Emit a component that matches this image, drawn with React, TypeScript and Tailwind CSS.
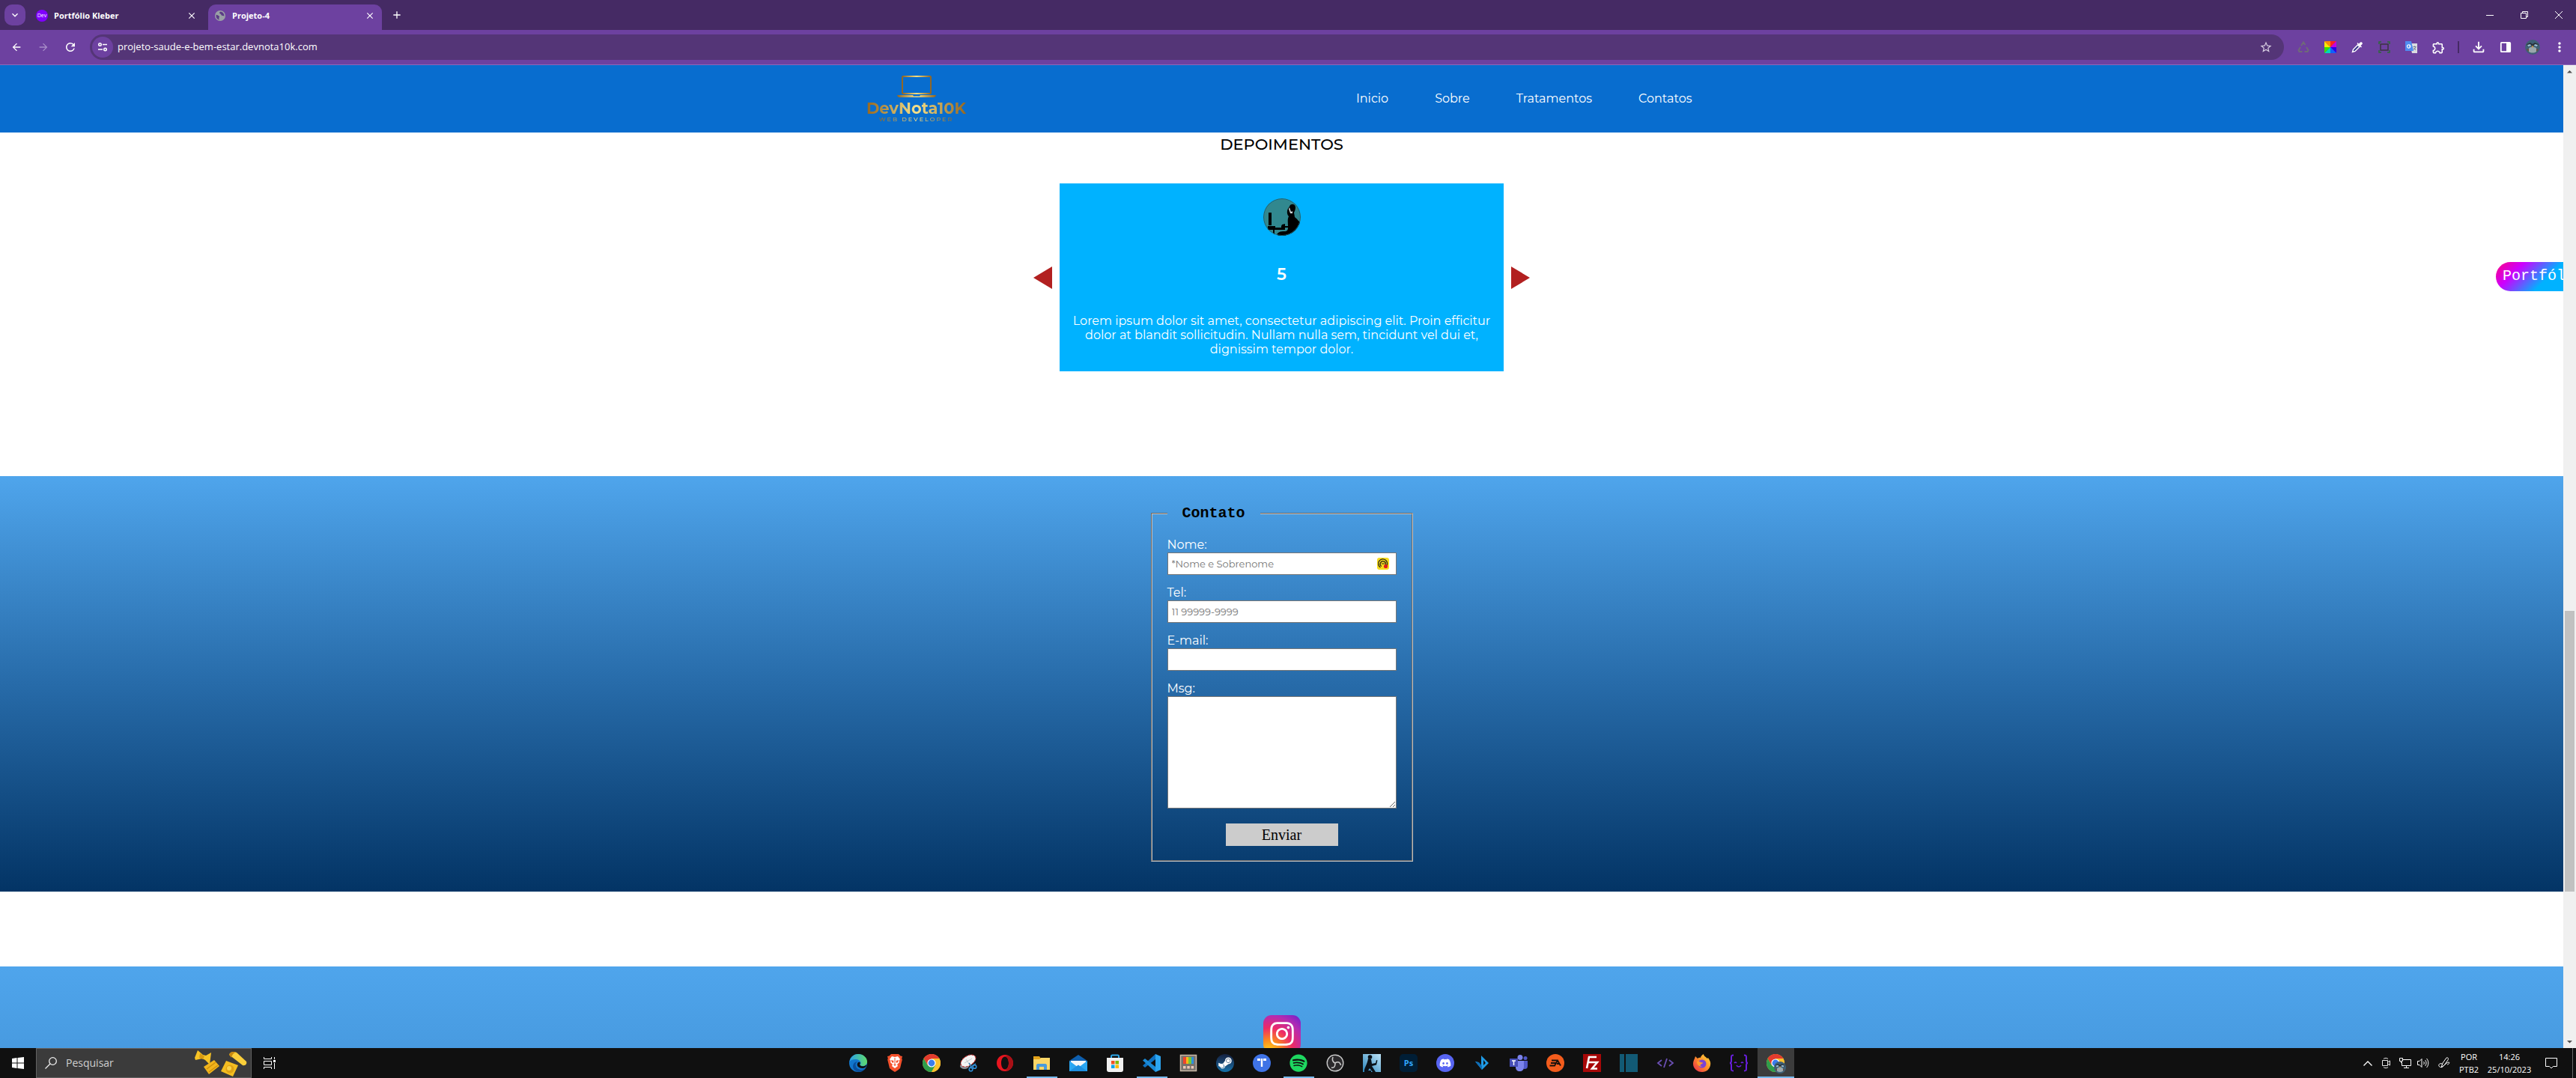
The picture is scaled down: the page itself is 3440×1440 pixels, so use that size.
import React from "react";
import { FaDiscord, FaSpotify, FaSteamSymbol, FaInstagram } from "react-icons/fa";
import {
  MdArrowBack,
  MdArrowForward,
  MdRefresh,
  MdClose,
  MdAdd,
  MdKeyboardArrowDown,
  MdStarBorder,
  MdOutlineExtension,
  MdMoreVert,
  MdOutlineFileDownload,
} from "react-icons/md";

type Box = { children: React.ReactNode; size?: string };

function Glyph({ children, size = "size-6" }: Box) {
  return (
    <svg viewBox="0 0 24 24" className={size} aria-hidden="true">
      {children}
    </svg>
  );
}

/* ---------- Browser chrome ---------- */

function Globe() {
  return (
    <svg viewBox="0 0 16 16" className="size-[14px] shrink-0" aria-hidden="true">
      <circle cx="8" cy="8" r="8" fill="#9aa0a6" />
      <path
        d="M1.8 6.5c2 .2 3.4 1 4.6 2 .9.8.4 2-.2 2.6-.5.5 0 1.800.8 2.900C3.600 13.800 1.400 11 1.800 6.500zM8.500 1.800c-1.300.5-2 1.400-1.300 2.400.6.9 1.800.6 2 1.600.3 1.300 1.500 2.500 3 2.300.9-.1 1.500.3 1.900.8.3-3.600-2-6.700-5.600-7.100z"
        fill="#5b3b86"
      />
    </svg>
  );
}

function TabStrip() {
  return (
    <div className="flex h-10 shrink-0 items-end bg-[#452a64] text-white">
      <button aria-label="Pesquisar guias" className="mb-[6px] ml-[6px] flex size-7 items-center justify-center rounded-[10px] bg-[#6d41a0]">
        <MdKeyboardArrowDown className="size-4" />
      </button>
      <div className="ml-[6px] flex h-[34px] w-[238px] items-center pr-[15px] pb-1 pl-2">
        <span className="flex size-4 items-center justify-center rounded-full bg-[#8000ff] text-[7px]">Dev</span>
        <span className="ml-2 grow text-[11px] leading-4 font-bold">Portfólio Kleber</span>
        <button aria-label="Fechar guia Portfólio Kleber">
          <MdClose className="size-[14px]" />
        </button>
      </div>
      <div className="flex h-[34px] w-[232px] items-center rounded-t-[10px] bg-[#6d41a0] pr-[9px] pb-1 pl-[9px]">
        <Globe />
        <span className="ml-[9px] grow text-[11px] leading-4 font-bold">Projeto-4</span>
        <button aria-label="Fechar guia Projeto-4">
          <MdClose className="size-[14px]" />
        </button>
      </div>
      <button aria-label="Nova guia" className="mb-3 ml-3">
        <MdAdd className="size-4" />
      </button>
      <div className="ml-auto flex h-10 items-center">
        <button aria-label="Minimizar" className="flex h-10 w-[46px] items-center justify-center">
          <span className="h-px w-[10px] bg-white" />
        </button>
        <button aria-label="Restaurar" className="flex h-10 w-[46px] items-center justify-center">
          <svg viewBox="0 0 10 10" className="size-[10px]" fill="none" stroke="#fff">
            <path d="M.5 2.500h7v7h-7zM2.500 2.500v-2h7v7h-2" />
          </svg>
        </button>
        <button aria-label="Fechar" className="flex h-10 w-[46px] items-center justify-center">
          <svg viewBox="0 0 10 10" className="size-[10px]" fill="none" stroke="#fff">
            <path d="M0 0l10 10M10 0L0 10" />
          </svg>
        </button>
      </div>
    </div>
  );
}

const wheel = ["#ff2020", "#ff8a00", "#ffe600", "#3be000", "#00d5c0", "#1060ff", "#2a00e8", "#c400e0"];

function ColorWheel() {
  const points = [[8, 0], [16, 0], [16, 8], [16, 16], [8, 16], [0, 16], [0, 8], [0, 0]];
  const fills = [wheel[0], wheel[7], wheel[6], wheel[5], wheel[4], wheel[3], wheel[2], wheel[1]];
  return (
    <svg viewBox="0 0 16 16" className="size-4">
      {points.map((p, i) => {
        const q = points[(i + 1) % 8];
        return <path key={i} d={`M8 8L${p[0]} ${p[1]}L${q[0]} ${q[1]}z`} fill={fills[i]} />;
      })}
    </svg>
  );
}

function Slot({ label, children }: { label: string; children: React.ReactNode }) {
  return (
    <button aria-label={label} className="flex h-[34px] w-9 items-center justify-center">
      {children}
    </button>
  );
}

function Toolbar() {
  return (
    <div className="flex h-[47px] shrink-0 items-center border-b border-[#8d68b8] bg-[#6d41a0] pr-1 pl-1 text-white">
      <Slot label="Voltar"><MdArrowBack className="size-4" /></Slot>
      <Slot label="Avançar"><MdArrowForward className="size-4 text-[#a78cc8]" /></Slot>
      <Slot label="Recarregar"><MdRefresh className="size-[18px]" /></Slot>
      <div className="ml-2 flex h-[34px] grow items-center rounded-full bg-[#543577] pr-[6px] pl-[3px]">
        <button aria-label="Informações do site" className="flex size-7 items-center justify-center rounded-full bg-[#6d41a0]">
          <svg viewBox="0 0 16 16" className="size-4" fill="none" stroke="#fff" strokeWidth="1.600">
            <circle cx="4.500" cy="4.500" r="1.700" />
            <circle cx="11.500" cy="11" r="1.700" />
            <path d="M8 4.500h6M2 11h6" />
          </svg>
        </button>
        <input
          aria-label="Barra de endereço"
          defaultValue="projeto-saude-e-bem-estar.devnota10k.com"
          className="ml-[6px] min-w-0 grow bg-transparent text-[13px] text-white outline-none"
        />
        <button aria-label="Favoritar" className="flex w-9 justify-center">
          <MdStarBorder className="size-[18px] text-[#d8cfe2]" />
        </button>
      </div>
      <div className="ml-2 flex items-center">
        <Slot label="Reciclar">
          <svg viewBox="0 0 16 16" className="size-4" fill="none" stroke="#6f6a78" strokeWidth="2">
            <path d="M5 6l3-4.500L10.500 5M12 8l2.500 4-1 2H9.500M6.500 14H2.500l-1-2L4 8" />
          </svg>
        </Slot>
        <Slot label="Cores"><ColorWheel /></Slot>
        <Slot label="Conta-gotas">
          <svg viewBox="0 0 16 16" className="size-4">
            <path d="M1.500 14.500l1-3.500 6-6 2.500 2.500-6 6z" fill="#3d3a8f" stroke="#fff" strokeWidth="1.400" />
            <path d="M7.500 3l5.500 5.500 1-1-1.500-1.500 2-2c1.300-1.300-1-3.600-2.500-2.500l-2 2L8.500 2z" fill="#fff" />
          </svg>
        </Slot>
        <Slot label="Captura">
          <svg viewBox="0 0 16 16" className="size-4" fill="none">
            <path d="M1 4V1h3M12 1h3v3M15 12v3h-3M4 15H1v-3" stroke="#2c6b3a" strokeWidth="1.500" />
            <path d="M3 4h10v8H3z" stroke="#3b3540" strokeWidth="1.500" />
          </svg>
        </Slot>
        <Slot label="Tradutor">
          <svg viewBox="0 0 16 16" className="size-4">
            <path d="M6 3h10v13H9z" fill="#dadce0" />
            <path d="M0 0h8l3 13H0z" fill="#4f8cf0" />
            <path d="M6.800 6.300A2.200 2.200 0 106.900 7H5" fill="none" stroke="#fff" strokeWidth="1.200" />
            <path d="M10.500 7.500h4M12.500 6.500v1M14 7.500c-.5 2-1.500 3-3 4M11.500 9l2.500 3" stroke="#6b7b8c" fill="none" />
          </svg>
        </Slot>
        <Slot label="Extensões"><MdOutlineExtension className="size-[19px]" /></Slot>
        <span className="mx-2 h-4 w-[2px] bg-[#452a64]" />
        <Slot label="Downloads"><MdOutlineFileDownload className="size-[22px]" /></Slot>
        <Slot label="Painel lateral">
          <svg viewBox="0 0 16 16" className="size-4">
            <rect x="1.800" y="1.800" width="12.400" height="12.400" rx="1" fill="none" stroke="#fff" strokeWidth="1.800" />
            <path d="M9 2h5v12H9z" fill="#fff" />
          </svg>
        </Slot>
        <Slot label="Perfil"><Penguin size="size-5" /></Slot>
        <Slot label="Menu"><MdMoreVert className="size-5" /></Slot>
      </div>
    </div>
  );
}

function Penguin({ size }: { size: string }) {
  return (
    <svg viewBox="0 0 20 20" className={size}>
      <circle cx="10" cy="10" r="10" fill="#3f6076" />
      <path d="M2 6l5-2 3 2 3-2 5 2-1 3-4-1H7L3 9z" fill="#2a323b" />
      <path d="M3 7l4-1 1 2-4 1zM12 8l1-2 4 1-1 2z" fill="#9cc3da" />
      <path d="M5 12c0-3 10-3 10 0v4c-3 2-7 2-10 0z" fill="#9aa7ac" />
      <path d="M8.500 8.500h3L10 11z" fill="#e09a35" />
      <path d="M2 13l3-1v4zM18 13l-3-1v4z" fill="#6d4b3a" />
    </svg>
  );
}

/* ---------- Page ---------- */

function Logo() {
  return (
    <a href="#inicio" className="flex w-[130px] flex-col items-center">
      <svg viewBox="0 0 52 30" className="h-[30px] w-[52px]" aria-hidden="true">
        <defs>
          <linearGradient id="gold" x1="0" x2="1">
            <stop offset="0" stopColor="#8f6524" />
            <stop offset=".5" stopColor="#f3df85" />
            <stop offset="1" stopColor="#8f6524" />
          </linearGradient>
        </defs>
        <rect x="7" y="1" width="38" height="23" rx="1" fill="none" stroke="url(#gold)" strokeWidth="2" />
        <path d="M0 26h21l1 1.500h8l1-1.500h21c-.5 2-1.500 3-3 3H3c-1.500 0-2.500-1-3-3z" fill="url(#gold)" />
      </svg>
      <span className="mt-1 bg-[linear-gradient(90deg,#95661f,#f5e28c,#95661f)] bg-clip-text text-[21px] leading-5 font-bold text-transparent">
        DevNota10K
      </span>
      <span className="bg-[linear-gradient(90deg,#95661f,#f5e28c,#95661f)] bg-clip-text text-[8px] leading-2 font-medium tracking-[2px] text-transparent">
        WEB DEVELOPER
      </span>
    </a>
  );
}

function SiteHeader() {
  return (
    <header className="flex h-[90px] shrink-0 justify-center bg-[#086dcf]">
      <div className="flex w-full max-w-[1106px] items-center justify-between pr-[5px]">
        <Logo />
        <nav className="flex gap-[62px] text-base leading-5 text-white">
          <a href="#inicio">Inicio</a>
          <a href="#sobre">Sobre</a>
          <a href="#tratamentos">Tratamentos</a>
          <a href="#contatos">Contatos</a>
        </nav>
      </div>
    </header>
  );
}

function Testimonials() {
  return (
    <section className="h-[459px] shrink-0 bg-white">
      <h2 className="pt-1 text-center text-[21px] leading-6 font-medium text-black">DEPOIMENTOS</h2>
      <div className="mt-10 flex items-center justify-center gap-[10px]">
        <button aria-label="Anterior">
          <svg viewBox="0 0 25 30" className="h-[30px] w-[25px]"><path d="M25 0v30L0 15z" fill="#b22020" /></svg>
        </button>
        <article className="flex w-[593px] flex-col items-center bg-[#00b2ff] px-4 py-5 text-center text-white">
          <svg viewBox="0 0 50 50" className="size-[50px]" role="img" aria-label="Foto do cliente">
            <clipPath id="avatar"><circle cx="25" cy="25" r="25" /></clipPath>
            <g clipPath="url(#avatar)">
              <path d="M0 0h50v50H0z" fill="#31888f" />
              <path d="M7 19h4v17H7zM6 37h23v-3l-4 1-1 2H16v2h13v3H15v8h-2v-8H6z" />
              <path d="M35 11c1-5 8-4 8 1 0 3-1 5-2 7l1 6c4 3 6 7 8 7v18H18c0-5 5-6 10-6 4 0 5-2 5-5h-9v-2h9c0-6-1-9 1-13-3-3-3-9 1-13z" />
              <path d="M35 12l2 6 2-1v3h-3l-2-6z" fill="#cfd6d8" />
              <circle cx="25" cy="25" r="24.500" fill="none" stroke="#1d5f74" />
            </g>
          </svg>
          <strong className="mt-10 text-[22px] leading-6 font-semibold">5</strong>
          <p className="mt-10 text-base leading-[19px]">
            Lorem ipsum dolor sit amet, consectetur adipiscing elit. Proin efficitur
            <br />
            dolor at blandit sollicitudin. Nullam nulla sem, tincidunt vel dui et,
            <br />
            dignissim tempor dolor.
          </p>
        </article>
        <button aria-label="Próximo">
          <svg viewBox="0 0 25 30" className="h-[30px] w-[25px]"><path d="M0 0v30l25-15z" fill="#b22020" /></svg>
        </button>
      </div>
    </section>
  );
}

const field =
  "block h-[30px] w-full border border-[#767676] bg-white px-[5px] text-[13px] text-black placeholder:text-[#757575] outline-none";

function ContactForm() {
  return (
    <section id="contatos" className="flex h-[555px] shrink-0 justify-center bg-[linear-gradient(180deg,#4fa5ec,#276ba9_50%,#033465)] pt-[38px]">
      <form className="w-[350px]" onSubmit={(e) => e.preventDefault()}>
        <fieldset className="h-[477px] border-2 border-[#c0c0c0] px-5 [border-style:groove]">
          <legend className="px-5 font-['Liberation_Mono'] text-xl leading-6 font-bold text-black">Contato</legend>
          <div className="mt-5 flex flex-col gap-[14px] text-base leading-5 text-white">
            <label className="block">
              Nome:
              <span className="relative block">
                <input type="text" placeholder="*Nome e Sobrenome" className={field} />
                <svg viewBox="0 0 16 16" className="absolute top-[7px] right-[10px] size-4">
                  <rect width="16" height="16" rx="3" fill="#f7dc1c" />
                  <path d="M4.500 13a6 6 0 117.500-1M6 11.500a3.600 3.600 0 115-1.500" fill="none" stroke="#2b2413" strokeWidth="1.300" />
                  <path d="M6 8h4" stroke="#2b2413" />
                  <circle cx="11.500" cy="11.500" r="2.600" fill="#e01b1b" />
                </svg>
              </span>
            </label>
            <label className="block">
              Tel:
              <input type="tel" placeholder="11 99999-9999" className={field} />
            </label>
            <label className="block">
              E-mail:
              <input type="email" className={field} />
            </label>
            <label className="block">
              Msg:
              <textarea className="block h-[150px] w-full resize border border-[#767676] bg-white px-[5px] text-[13px] text-black outline-none" />
            </label>
          </div>
          <button className="mx-auto mt-5 block h-[30px] w-[150px] bg-[#cccccc] font-['Liberation_Serif'] text-xl leading-[30px] text-black">
            Enviar
          </button>
        </fieldset>
      </form>
    </section>
  );
}

function SiteFooter() {
  return (
    <footer className="mt-[100px] flex h-[555px] shrink-0 justify-center bg-[linear-gradient(180deg,#4fa5ec,#2a70b0)] pt-[65px]">
      <a
        href="#instagram"
        aria-label="Instagram"
        className="flex size-[50px] items-center justify-center rounded-[11px] bg-[radial-gradient(circle_at_15%_100%,#ffe01b_0%,#fb8a1e_25%,#ee2a66_50%,#b52bb0_75%,#6a1fd0_100%)] text-white"
      >
        <FaInstagram className="size-9" />
      </a>
    </footer>
  );
}

function ScrollBar() {
  return (
    <div className="flex w-[17px] shrink-0 flex-col items-center bg-[#f0f0f0]" aria-hidden="true">
      <svg viewBox="0 0 17 17" className="size-[17px]"><path d="M5 10.500h7L8.500 7z" fill="#505050" /></svg>
      <div className="grow-[712]" />
      <div className="w-[13px] grow-[375] bg-[#c1c1c1]" />
      <div className="grow-[192]" />
      <svg viewBox="0 0 17 17" className="size-[17px]"><path d="M5 7h7l-3.500 3.500z" fill="#505050" /></svg>
    </div>
  );
}

/* ---------- Taskbar ---------- */

type TaskItem = { name: string; icon: React.ReactNode; open?: boolean; active?: boolean };

const chrome = (
  <>
    <circle cx="12" cy="12" r="12" fill="#fbc02d" />
    <path d="M12 6h10.400A12 12 0 001.600 6L7 15z" fill="#e33b2e" />
    <path d="M1.600 6L6.800 15l5.200 3-2 5.900A12 12 0 011.600 6z" fill="#2f9e4b" />
    <path d="M6.800 15h10.400L12 24a12 12 0 01-1.500-.1z" fill="#2f9e4b" />
    <path d="M17.200 15L12 24A12 12 0 0022.400 6H12z" fill="#fbc02d" />
    <circle cx="12" cy="12" r="5.600" fill="#fff" />
    <circle cx="12" cy="12" r="4.400" fill="#3b7ded" />
  </>
);

const apps: TaskItem[] = [
  {
    name: "Edge",
    icon: (
      <Glyph>
        <defs>
          <linearGradient id="edge" x1="0" x2="1"><stop stopColor="#2a9fe6" /><stop offset="1" stopColor="#5fdc6c" /></linearGradient>
        </defs>
        <circle cx="12" cy="12" r="12" fill="#1176cc" />
        <path d="M.5 10C2 3 7 0 12 0c7 0 12 5 12 10 0 4-3 6-6 6s-4-1-3.500-2c1-1 1-2 1-2.500C15 9 12 7 8.500 7S2 8 .5 10z" fill="url(#edge)" />
        <path d="M8.500 14c0 5 4.500 7 8 7 2 0 4-1 5-2-2 3.500-6 5-9 5-6-1-8.500-6-7-10 1-3 4-4 6-4-2 1-3 2.500-3 4z" fill="#0a4f9c" />
        <path d="M14.800 12c0 1-1.500 2 .5 3.500s6 1 8-1.500c0 3-2.500 5-6 5-5 0-8-4-6-7 1-2 3.500-1.500 3.500 0z" fill="#101010" />
      </Glyph>
    ),
  },
  {
    name: "Brave",
    icon: (
      <Glyph>
        <path d="M7 0h10l2.500 2.500L22 3l-.8 3 .6 1.500L19 19l-3 2.500L12 24l-4-2.500L5 19 2.200 7.500 2.800 6 2 3l2.500-.5z" fill="#f4512c" />
        <path d="M12 4l4-1 3 4-1.500 2 .5 2-3 3 1 2-4 3-4-3 1-2-3-3 .5-2L5 7l3-4z" fill="#fff" />
        <path d="M7 8l3.500 1-.5 3-2-1zM17 8l-3.500 1 .5 3 2-1zM10 14l2-.8 2 .8-2 2zM11.500 5h1v8h-1z" fill="#f4512c" />
      </Glyph>
    ),
  },
  { name: "Chrome", icon: <Glyph>{chrome}</Glyph> },
  {
    name: "Ferramenta de Captura",
    icon: (
      <Glyph>
        <ellipse cx="7" cy="16" rx="6" ry="4" fill="#8a8f96" />
        <ellipse cx="12" cy="9" rx="11" ry="6.500" transform="rotate(-32 12 9)" fill="#f4f4f4" stroke="#c33" strokeWidth="1" strokeDasharray="3 1.500" />
        <path d="M7 12l10-6M9 7l4 6" stroke="#b5bcc5" strokeWidth=".8" />
        <path d="M13 12l5 8M22 13l-8 5" stroke="#3a7fb8" strokeWidth="1.500" />
        <circle cx="15.500" cy="20.500" r="2.300" fill="none" stroke="#2f8fd8" strokeWidth="1.600" />
        <circle cx="20.500" cy="17" r="2.300" fill="none" stroke="#2f8fd8" strokeWidth="1.600" />
      </Glyph>
    ),
  },
  {
    name: "Opera",
    icon: (
      <Glyph>
        <path fillRule="evenodd" d="M12 1c6.500 0 11 5 11 11s-4.500 11-11 11S1 18 1 12 5.500 1 12 1zm0 2.500c-3 0-5 4-5 8.500s2 8.500 5 8.500 5-4 5-8.500-2-8.500-5-8.500z" fill="#e8151f" />
        <path d="M12 3.500C16 0 23 5 23 12s-7 12-11 8.500c3 0 5-4 5-8.500s-2-8.500-5-8.500z" fill="#a81016" />
      </Glyph>
    ),
  },
  {
    name: "Explorador de Arquivos",
    open: true,
    icon: (
      <Glyph>
        <path d="M1 3h8l2 3h11v15H1z" fill="#e3a21a" />
        <path d="M1 7h8l2-2h12v16H1z" fill="#fbd667" />
        <path d="M5 21v-6c0-1 1-2 2-2h10c1 0 2 1 2 2v6h-4v-4H9v4z" fill="#4a9bdc" />
      </Glyph>
    ),
  },
  {
    name: "Email",
    icon: (
      <Glyph>
        <path d="M0 9l12-8 12 8v14H0z" fill="#0f5fae" />
        <path d="M2 9h20v10H2z" fill="#f3f6f9" />
        <path d="M0 9l12 9L24 9v14H0z" fill="#2aa6f2" />
        <path d="M0 23l12-8.500L24 23z" fill="#1d8fe0" />
      </Glyph>
    ),
  },
  {
    name: "Microsoft Store",
    icon: (
      <Glyph>
        <path d="M7 6V3c0-1 .5-1.500 1.500-1.500h7c1 0 1.500.5 1.500 1.500v3" fill="none" stroke="#2ca6e8" strokeWidth="2" />
        <path d="M1 5h22v16c0 2-1 3-3 3H4c-2 0-3-1-3-3z" fill="#f1f1f1" />
        <path d="M7 9h4.500v4.500H7z" fill="#f25022" /><path d="M12.500 9H17v4.500h-4.500z" fill="#7fba00" />
        <path d="M7 14.500h4.500V19H7z" fill="#00a4ef" /><path d="M12.500 14.500H17V19h-4.500z" fill="#ffb900" />
      </Glyph>
    ),
  },
  {
    name: "Visual Studio Code",
    open: true,
    icon: (
      <Glyph>
        <path d="M17 0v7L3 18l-3-2.500z" fill="#0e70c0" />
        <path d="M17 24v-7L3 6 0 8.500z" fill="#1a8ad6" />
        <path d="M17 0l7 3v18l-7 3z" fill="#2ba5f0" />
      </Glyph>
    ),
  },
  {
    name: "PowerToys",
    icon: (
      <Glyph>
        <path d="M1.500 1.500h21v21h-21z" fill="#77716c" stroke="#c9b9a6" strokeWidth="1.500" />
        <path d="M5 4h4v9H5z" fill="#f0452c" /><path d="M9 4h3v9H9z" fill="#f9b817" />
        <path d="M12 4h4v9h-4z" fill="#74c83a" /><path d="M16 4h3v9h-3z" fill="#2b8fe0" />
        <path d="M5 16h3.500v3.500H5zM10.300 16h3.500v3.500h-3.500zM15.600 16h3.500v3.500h-3.500z" fill="#ecc9b8" />
      </Glyph>
    ),
  },
  {
    name: "Steam",
    icon: (
      <span className="flex size-6 items-center justify-center rounded-full bg-linear-to-b from-[#13203f] to-[#1273ac] text-white">
        <FaSteamSymbol className="size-5" />
      </span>
    ),
  },
  {
    name: "Tarefas",
    icon: (
      <Glyph>
        <circle cx="12" cy="12" r="12" fill="#3f73e6" />
        <path d="M6 7.500h4M14 7.500h4" stroke="#fff" strokeWidth="3" />
        <path d="M12 6v11" stroke="#fff" strokeWidth="2.400" />
      </Glyph>
    ),
  },
  {
    name: "Spotify",
    open: true,
    icon: <FaSpotify className="size-6 text-[#1ed760]" />,
  },
  {
    name: "OBS Studio",
    icon: (
      <Glyph>
        <circle cx="12" cy="12" r="10.800" fill="#2b2a2c" stroke="#c9c9c9" strokeWidth="1.400" />
        <path d="M9 4c-1.500 4 0 7 3 8M19.500 15c-.5-4-4-5.500-7.500-3M7 18c4 1 5-2 5-6" fill="none" stroke="#c9c9c9" strokeWidth="1.600" />
      </Glyph>
    ),
  },
  {
    name: "Kindle",
    icon: (
      <Glyph>
        <defs><linearGradient id="kindle" x1="0" x2="1" y1="1" y2="0"><stop stopColor="#2b86bd" /><stop offset="1" stopColor="#bfe4f7" /></linearGradient></defs>
        <path d="M0 0h24v24H0z" fill="url(#kindle)" />
        <circle cx="9.500" cy="4" r="2.800" fill="#0a1118" />
        <path d="M7 6l4 1 1 6 5-1 1-4 1.500.5-1.500 6-6 1.500 5 8h-4l-4-5-2 3h4v2H2c-1-5 4-10 5-18z" fill="#0a1118" />
      </Glyph>
    ),
  },
  {
    name: "Photoshop",
    icon: <span className="flex size-6 items-center justify-center rounded-[5px] bg-[#001e36] text-[11px] font-bold text-[#31a8ff]">Ps</span>,
  },
  {
    name: "Discord",
    icon: (
      <span className="flex size-6 items-center justify-center rounded-full bg-[#5865f2] text-white">
        <FaDiscord className="size-4" />
      </span>
    ),
  },
  {
    name: "Baixador",
    icon: (
      <Glyph>
        <path d="M3 10l4 1 4 5V2l10 10-9 9z" fill="#1f9be6" />
        <path d="M14 8l3 4-3 3z" fill="#101010" />
        <path d="M3 10l9 11v-5L8 11z" fill="#0f6db5" />
      </Glyph>
    ),
  },
  {
    name: "Teams",
    icon: (
      <Glyph>
        <circle cx="14" cy="4.500" r="3.500" fill="#7b83eb" /><circle cx="21" cy="5.500" r="2.500" fill="#5059c9" />
        <path d="M17 9h7v7c0 3-2 4-4 4s-3-1-3-3z" fill="#5059c9" />
        <path d="M8 9h11v8c0 4-2 6-5.500 6S8 21 8 17z" fill="#7b83eb" />
        <path d="M0 6h11v11H0z" fill="#464eb8" />
        <path d="M3 9h5M5.500 9v6" stroke="#fff" strokeWidth="1.500" />
      </Glyph>
    ),
  },
  {
    name: "EA",
    icon: (
      <Glyph>
        <circle cx="12" cy="12" r="12" fill="#f35c1c" />
        <path d="M7 8.500h7M6 12h6.500M4.500 15.500h6.500l4-7 4 7M14 13h4" fill="none" stroke="#16100d" strokeWidth="1.800" />
      </Glyph>
    ),
  },
  {
    name: "FileZilla",
    icon: (
      <Glyph>
        <path d="M0 0h24v24H0z" fill="#a80808" />
        <path d="M5 19L8 4h10M6.500 11h8M12 11h7l-7 8.500h7" fill="none" stroke="#fff" strokeWidth="2.600" />
      </Glyph>
    ),
  },
  {
    name: "Painéis",
    icon: <Glyph><path d="M0 0h6v24H0zM8 0h16v24H8z" fill="#125a75" /></Glyph>,
  },
  {
    name: "Editor",
    icon: (
      <Glyph>
        <path d="M7 8l-5 4 5 4M17 8l5 4-5 4M14 6l-4 12" fill="none" stroke="#6a4fb3" strokeWidth="1.800" />
      </Glyph>
    ),
  },
  {
    name: "Firefox",
    icon: (
      <Glyph>
        <defs><linearGradient id="fox" x1="1" x2="0" y1="0" y2="1"><stop stopColor="#ffe23d" /><stop offset=".5" stopColor="#ff8a2a" /><stop offset="1" stopColor="#ec2350" /></linearGradient></defs>
        <path d="M2 6l1-3 3 3c1-1 3-1.500 4-1 0-2 2-4 4-5 0 3 3 3.500 5 6l1-1c2 3 4 6 3 10-1 5-5 9-11 9C5 24 0 19 0 13c0-3 1-5 2-7z" fill="url(#fox)" />
        <circle cx="12" cy="13" r="5.500" fill="#7a43d6" />
        <path d="M5 10c2-1 4 0 5 1l3 .5c0 1.500-2 1.500-3 2.500s0 2.500 2 2.500c-4 1-7-2-7-6.500z" fill="#ff9a2c" />
      </Glyph>
    ),
  },
  {
    name: "Chaves",
    icon: (
      <Glyph>
        <path d="M5 1.500c-3 0-3 1-3 3V9c0 2-1 3-2 3 1 0 2 1 2 3v4.500c0 2 0 3 3 3M19 1.500c3 0 3 1 3 3V9c0 2 1 3 2 3-1 0-2 1-2 3v4.500c0 2 0 3-3 3" fill="none" stroke="#6a1fe0" strokeWidth="2" />
        <path d="M6 12c1-1.500 2-1.500 3 0M15 12c1-1.500 2-1.500 3 0M9 15c1 2.500 5 2.500 6 0" fill="none" stroke="#6a1fe0" strokeWidth="1.500" />
      </Glyph>
    ),
  },
  {
    name: "Chrome perfil",
    open: true,
    active: true,
    icon: (
      <span className="relative block size-6">
        <Glyph>{chrome}</Glyph>
        <span className="absolute -right-[2px] -bottom-[2px]"><Penguin size="size-4" /></span>
      </span>
    ),
  },
];

function TaskApp({ app }: { app: TaskItem }) {
  return (
    <button
      aria-label={app.name}
      className={
        app.active
          ? "relative flex h-10 w-[49px] items-center justify-center bg-[#3c3c3c]"
          : "relative flex h-10 w-[49px] items-center justify-center"
      }
    >
      {app.icon}
      {app.open && (
        <span className={app.active ? "absolute inset-x-0 bottom-0 h-[2px] bg-[#76b9ed]" : "absolute inset-x-1 bottom-0 h-[2px] bg-[#76b9ed]"} />
      )}
    </button>
  );
}

function Pasta() {
  return (
    <svg viewBox="0 0 72 38" className="h-[38px] w-[72px] shrink-0" aria-hidden="true">
      <path d="M1 12L5 2l7 6 4 1 7-4-2 16-6-6-4-2-9 2z" fill="#f7c325" />
      <path d="M8 6l6 4-2 4-5-2z" fill="#d99a10" />
      <path d="M13 24l14-9 7 8-14 11z" fill="#f2b51c" />
      <path d="M17 27l12-9M20 31l12-9" stroke="#cf8f0c" strokeWidth="1.500" />
      <path d="M47 8c1-4 6-5 10-3l13 12c1 3-1 6-5 5z" fill="#fbcf3a" />
      <path d="M47 8c1-4 6-5 9-3-3 0-5 3-6 7z" fill="#c98a10" />
      <path d="M36 30l7-14 16 6-7 15z" fill="#f4bd20" />
      <circle cx="48" cy="27" r="5.500" fill="#e0a315" /><circle cx="47" cy="26" r="3" fill="#f9d24a" />
    </svg>
  );
}

function Taskbar() {
  return (
    <div className="grid h-10 shrink-0 grid-cols-[1fr_auto_1fr] bg-[#101010] text-white">
      <div className="flex items-center">
        <button aria-label="Iniciar" className="flex h-10 w-12 items-center justify-center">
          <svg viewBox="0 0 16 16" className="size-4" fill="#fff">
            <path d="M0 2l6.500-1v6.500H0zM7.500.9L16 0v7.500H7.500zM0 8.500h6.500V15L0 14zM7.500 8.500H16V16l-8.500-1z" />
          </svg>
        </button>
        <div className="flex h-10 w-[288px] items-center border border-[#626262] bg-[#3b3b3b] pr-1 pl-[11px]">
          <svg viewBox="0 0 16 16" className="size-4 shrink-0" fill="none" stroke="#eee" strokeWidth="1.300">
            <circle cx="10.500" cy="5.500" r="4.800" /><path d="M7 9l-6.500 6.500" />
          </svg>
          <input aria-label="Pesquisar" placeholder="Pesquisar" className="ml-3 w-0 min-w-0 grow bg-transparent text-sm outline-none placeholder:text-[#cfcfcf]" />
          <Pasta />
        </div>
        <button aria-label="Visão de tarefas" className="ml-4">
          <svg viewBox="0 0 16 16" className="size-4" fill="none" stroke="#fff">
            <path d="M.5 0v2.500h10V0M.5 16v-2.500h10V16M.5 5.500h10v5H.5zM14.500 0v3M14.500 8v8" /><path d="M13 4h3v3h-3z" fill="#fff" stroke="none" />
          </svg>
        </button>
      </div>
      <div className="ml-[77px] flex">
        {apps.map((a) => <TaskApp key={a.name} app={a} />)}
      </div>
      <div className="flex items-center justify-end text-[11px] leading-[17px]">
        <svg viewBox="0 0 12 7" className="h-[7px] w-3" fill="none" stroke="#fff" strokeWidth="1.300"><path d="M.5 6.500L6 1l5.500 5.500" /></svg>
        <svg viewBox="0 0 14 16" className="ml-3 h-4 w-[14px]" fill="none" stroke="#e8e8e8">
          <path d="M3 2.500C4 1 8 1 9 2.500M3 13.500C4 15 8 15 9 13.500M1.500 4.500h7v7h-7zM8.500 7l3-2v6l-3-2" />
        </svg>
        <svg viewBox="0 0 16 16" className="ml-[10px] size-4" fill="none" stroke="#fff">
          <path d="M5 3.500h10.500v8H3.500V7M9.500 11.500v3M6 14.500h7M.5 1.500h4v4h-4zM2.500 5.500V8" />
        </svg>
        <svg viewBox="0 0 16 16" className="ml-2 size-4" fill="none" stroke="#fff">
          <path d="M.5 5.500h2.500l3-3v11l-3-3H.5zM8.500 6c1 1 1 3 0 4M10.500 4c2 2 2 6 0 8M12.500 2c3 3 3 9 0 12" />
        </svg>
        <svg viewBox="0 0 16 16" className="ml-3 size-4" fill="none" stroke="#fff">
          <path d="M4 14l2-6 5-7c2-1 3 1 2 3l-5 7zM5 9c-3-1-5 1-4 3s4 2 6 0 5-5 7-5-0 3-2 3" />
        </svg>
        <div className="ml-[11px] w-7 text-center">POR<br />PTB2</div>
        <div className="ml-2 w-16 text-center">14:26<br />25/10/2023</div>
        <svg viewBox="0 0 16 16" className="ml-4 size-4" fill="none" stroke="#fff">
          <path d="M.5 1.500h15v11h-5L8 15l-2.500-2.500h-5z" />
        </svg>
        <span className="mr-1 ml-5 h-10 w-px bg-[#6a6a6a]" />
      </div>
    </div>
  );
}

export default function App() {
  return (
    <div className="flex h-screen flex-col overflow-hidden bg-white font-['Open_Sans',sans-serif]">
      <TabStrip />
      <Toolbar />
      <div className="flex min-h-0 grow">
        <main className="relative flex min-w-0 grow flex-col overflow-hidden bg-white font-['Montserrat','Inter',sans-serif]">
          <SiteHeader />
          <Testimonials />
          <ContactForm />
          <SiteFooter />
          <a
            href="#portfolio"
            className="absolute top-[263px] right-0 h-[39px] w-[90px] overflow-hidden rounded-l-full bg-[linear-gradient(135deg,#ff0080,#cc00ff_30%,#00b2ff_70%)] pl-[9px] font-['Liberation_Mono'] text-xl leading-[38px] whitespace-nowrap text-white"
          >
            Portfólio
          </a>
        </main>
        <ScrollBar />
      </div>
      <Taskbar />
    </div>
  );
}
